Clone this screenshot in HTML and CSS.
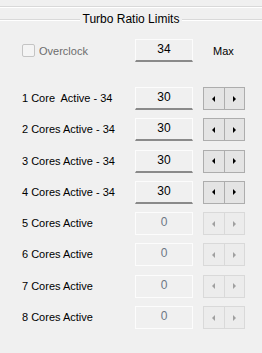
FILE: index.html
```html
<!DOCTYPE html>
<html>
<head>
<meta charset="UTF-8">
<title>Turbo Ratio Limits</title>
<link rel="stylesheet" href="styles.css">
</head>
<body>

<div class="topline"></div>

<div class="group">
	<div class="legend"><span>Turbo Ratio Limits</span></div>

	<div class="over">
		<label class="chk"><span class="box"></span>Overclock</label>
		<div class="edit">34</div>
		<div class="max">Max</div>
	</div>

	<div class="rows">
		<div class="lbl">1 Core&nbsp; Active - 34</div>
		<div class="edit">30</div>
		<div class="spin"><span class="l"></span><span class="r"></span></div>

		<div class="lbl">2 Cores Active - 34</div>
		<div class="edit">30</div>
		<div class="spin"><span class="l"></span><span class="r"></span></div>

		<div class="lbl">3 Cores Active - 34</div>
		<div class="edit">30</div>
		<div class="spin"><span class="l"></span><span class="r"></span></div>

		<div class="lbl">4 Cores Active - 34</div>
		<div class="edit">30</div>
		<div class="spin"><span class="l"></span><span class="r"></span></div>

		<div class="lbl">5 Cores Active</div>
		<div class="edit off">0</div>
		<div class="spin off"><span class="l"></span><span class="r"></span></div>

		<div class="lbl">6 Cores Active</div>
		<div class="edit off">0</div>
		<div class="spin off"><span class="l"></span><span class="r"></span></div>

		<div class="lbl">7 Cores Active</div>
		<div class="edit off">0</div>
		<div class="spin off"><span class="l"></span><span class="r"></span></div>

		<div class="lbl">8 Cores Active</div>
		<div class="edit off">0</div>
		<div class="spin off"><span class="l"></span><span class="r"></span></div>
	</div>
</div>

<div class="botline"></div>

</body>
</html>
```

FILE: styles.css
```css
* {box-sizing: border-box;}
body {margin: 0; background: #f0f0f0; font-family: "Liberation Sans", Arial, sans-serif; font-size: 11.5px; color: #000; width: 262px; height: 353px; overflow: hidden;}

.topline {margin-top: 6px; height: 2px; border-top: 1px solid #d9d9d9; border-bottom: 1px solid #ffffff;}

.group {height: 339px;}
.legend {position: relative; height: 2px; margin-top: 11px; border-top: 1px solid #d9d9d9; border-bottom: 1px solid #ffffff; display: flex; justify-content: center;}
.legend span {position: absolute; top: -9px; background: #f0f0f0; padding: 0 3px; line-height: 16px; font-size: 12px;}

.over {display: grid; grid-template-columns: 113px 58px 20px 40px; align-items: center; padding-left: 22px; margin-top: 18px; height: 22px;}
.chk {display: flex; align-items: center; gap: 4px; color: #6d6d6d; font-size: 11px;}
.chk .box {width: 13px; height: 13px; border: 1px solid #c4c4c4; border-radius: 2px; background: #f4f4f4;}
.max {grid-column: 4; font-size: 11px;}
.over .edit {grid-column: 2;}

.rows {display: grid; grid-template-columns: 103px 58px 42px; column-gap: 10px; row-gap: 8.3px; padding-left: 22px; margin-top: 26px; align-items: center;}
.lbl {line-height: 23px; font-size: 11px;}

.edit {height: 23px; background: #f0f0f0; border: 1px solid #fcfcfc; border-bottom: 2px solid #8a8a8a; text-align: center; line-height: 16px; padding-top: 1px; font-size: 12px;}
.edit.off {border-bottom: 1px solid #fcfcfc; color: #6d7785;}

.spin {display: flex; height: 23px; width: 42px;}
.spin span {flex: 1; border: 1px solid #adadad; background: #e4e4e4; display: flex; align-items: center; justify-content: center;}
.spin span + span {margin-left: -1px;}
.spin .l::before {content: ""; border-right: 3px solid #000; border-top: 3px solid transparent; border-bottom: 3px solid transparent;}
.spin .r::before {content: ""; border-left: 3px solid #000; border-top: 3px solid transparent; border-bottom: 3px solid transparent;}
.spin.off span {border-color: #d9d9d9; background: #ececec;}
.spin.off .l::before {border-right-color: #a0a0a0;}
.spin.off .r::before {border-left-color: #a0a0a0;}

.botline {height: 2px; border-top: 1px solid #d9d9d9; border-bottom: 1px solid #ffffff;}
```
